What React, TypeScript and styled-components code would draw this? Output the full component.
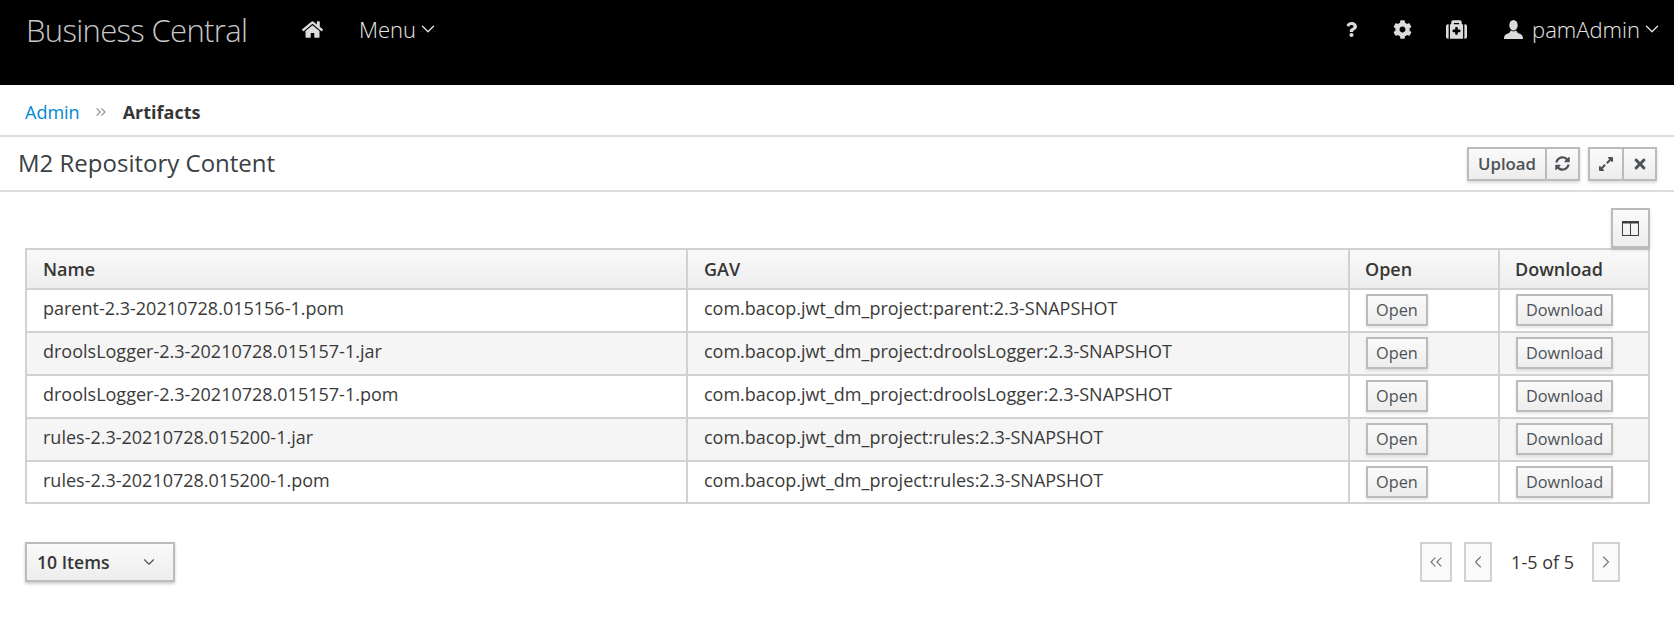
import React from "react";
import styled, { createGlobalStyle } from "styled-components";
import { ChevronDown, ChevronLeft, ChevronRight, ChevronsLeft, ChevronsRight } from "lucide-react";
import { FaCog, FaExpandAlt, FaHome, FaMedkit, FaQuestion, FaSyncAlt, FaTimes } from "react-icons/fa";

const colors = {
  text: "#363636",
  btnText: "#4d5258",
  line: "#d1d1d1",
  rule: "#dddddd",
  link: "#0088ce",
  navText: "#dcdcdc",
};

const GlobalStyle = createGlobalStyle`
  html, body {
    margin: 0;
    padding: 0;
    background: #fff;
    font-family: "Open Sans", "Liberation Sans", sans-serif;
    color: ${colors.text};
  }
`;

const Page = styled.div`
  width: 1674px;
  height: 635px;
  overflow: hidden;
`;

const Masthead = styled.header`
  height: 85px;
  background: #000;
  display: flex;
  align-items: flex-start;
  padding: 0 11px 0 26px;
  box-sizing: border-box;
  color: ${colors.navText};
`;

const Brand = styled.div`
  font-size: 31px;
  font-weight: 300;
  line-height: 30px;
  margin-top: 15px;
  width: 276px;
  color: #c8c8c8;
  letter-spacing: -0.66px;
  white-space: nowrap;
`;

const NavGroup = styled.nav<{ $right?: boolean }>`
  display: flex;
  align-items: center;
  height: 58px;
  margin-left: ${(p) => (p.$right ? "auto" : "0")};
`;

const NavIcon = styled.span<{ $gap: number; $size: number }>`
  display: inline-flex;
  font-size: ${(p) => p.$size}px;
  margin-right: ${(p) => p.$gap}px;
`;

const NavLabel = styled.span`
  display: inline-flex;
  align-items: center;
  gap: 1px;
  font-size: 22px;
  font-weight: 300;
  color: #e8e8e8;
`;

const Breadcrumb = styled.div`
  height: 47px;
  padding: 3px 0 0 25px;
  border-bottom: 2px solid ${colors.rule};
  display: flex;
  align-items: center;
  font-size: 18px;
`;

const CrumbLink = styled.a`
  color: ${colors.link};
`;

const CrumbSep = styled.span`
  display: inline-flex;
  color: #8b8d8f;
  margin: 0 14px 0 13px;
`;

const CrumbCurrent = styled.strong`
  font-weight: 700;
`;

const TitleBar = styled.div`
  height: 51px;
  padding: 0 17px 2px 18px;
  border-bottom: 2px solid ${colors.rule};
  display: flex;
  align-items: center;
  justify-content: space-between;
`;

const Title = styled.h1`
  margin: 0;
  font-size: 24px;
  font-weight: 400;
  color: #393f44;
`;

const Toolbar = styled.div`
  display: flex;
  gap: 8px;
  margin-bottom: -2px;
`;

const BtnGroup = styled.div`
  display: flex;
  box-shadow: 0 2px 3px rgba(3, 3, 3, 0.15);
`;

const Btn = styled.button<{ $w?: number }>`
  box-sizing: border-box;
  width: ${(p) => (p.$w ? `${p.$w}px` : "auto")};
  height: 34px;
  border: 2px solid #bbb;
  margin-left: -2px;
  &:first-child {
    margin-left: 0;
  }
  padding: 0;
  background: linear-gradient(to bottom, #fafafa, #ededed);
  color: ${colors.btnText};
  font-family: inherit;
  font-size: 16.8px;
  font-weight: 600;
  display: inline-flex;
  align-items: center;
  justify-content: center;
`;

const Content = styled.main`
  padding: 16px 25px 0;
`;

const ColumnRow = styled.div`
  display: flex;
  justify-content: flex-end;
`;

const ColumnBtn = styled(Btn)`
  width: 39px;
  height: 40px;
  margin: 0 -1px 0 0;
  box-shadow: 0 2px 3px rgba(3, 3, 3, 0.15);
`;

const Table = styled.table`
  width: 1623px;
  table-layout: fixed;
  border-collapse: collapse;
  border: 2px solid ${colors.line};
  font-size: 18px;
`;

const HeadRow = styled.tr`
  height: 40px;
  background: linear-gradient(to bottom, #fafafa, #ededed);
`;

const Th = styled.th<{ $w: number }>`
  width: ${(p) => p.$w}px;
  box-sizing: border-box;
  border: 2px solid ${colors.line};
  padding: 0 15px 1px;
  &:nth-child(-n + 2) {
    padding-left: 16px;
  }
  text-align: left;
  font-weight: 600;
`;

const Row = styled.tr<{ $alt: boolean }>`
  height: 42.9px;
  background: ${(p) => (p.$alt ? "#f5f5f5" : "#fff")};
`;

const Td = styled.td`
  box-sizing: border-box;
  border: 2px solid ${colors.line};
  padding: 0 15px 5px 16px;
  color: #3a3a3a;
  white-space: nowrap;
`;

const ActionCell = styled(Td)`
  padding: 0 15px 1px 16px;
`;

const ActionBtn = styled.button`
  display: block;
  box-sizing: border-box;
  height: 32px;
  padding: 0 8px;
  border: 2px solid #bbb;
  background: linear-gradient(to bottom, #fafafa, #ededed);
  color: ${colors.btnText};
  font-family: inherit;
  font-size: 16.3px;
  box-shadow: 0 2px 3px rgba(3, 3, 3, 0.1);
`;

const Footer = styled.div`
  display: flex;
  justify-content: space-between;
  align-items: center;
  margin-top: 38px;
`;

const PageSize = styled.button`
  box-sizing: border-box;
  width: 150px;
  height: 40px;
  padding: 0 15px 0 10px;
  border: 2px solid #bbb;
  background: linear-gradient(to bottom, #fafafa, #ededed);
  color: ${colors.text};
  font-family: inherit;
  font-size: 17.6px;
  font-weight: 600;
  display: flex;
  align-items: center;
  justify-content: space-between;
  box-shadow: 0 2px 3px rgba(3, 3, 3, 0.2);
`;

const Pager = styled.div`
  display: flex;
  align-items: center;
  margin-right: 17px;
`;

const PageBtn = styled.span<{ $w: number }>`
  box-sizing: border-box;
  width: ${(p) => p.$w}px;
  height: 40px;
  border: 2px solid ${colors.line};
  background: #fafafa;
  color: #72767b;
  display: inline-flex;
  align-items: center;
  justify-content: center;
  margin-right: 12px;
`;

const PageInfo = styled.span`
  font-size: 18px;
  margin: 0 18px 0 7px;
`;

const files = [
  ["parent-2.3-20210728.015156-1.pom", "com.bacop.jwt_dm_project:parent:2.3-SNAPSHOT"],
  ["droolsLogger-2.3-20210728.015157-1.jar", "com.bacop.jwt_dm_project:droolsLogger:2.3-SNAPSHOT"],
  ["droolsLogger-2.3-20210728.015157-1.pom", "com.bacop.jwt_dm_project:droolsLogger:2.3-SNAPSHOT"],
  ["rules-2.3-20210728.015200-1.jar", "com.bacop.jwt_dm_project:rules:2.3-SNAPSHOT"],
  ["rules-2.3-20210728.015200-1.pom", "com.bacop.jwt_dm_project:rules:2.3-SNAPSHOT"],
];

const ColumnsIcon = () => (
  <svg width="17" height="15" viewBox="0 0 17 15" fill="none" stroke="#393f44">
    <rect x="0.5" y="0.5" width="16" height="14" strokeWidth="1" />
    <path d="M0.5 1.5H16.5" strokeWidth="2" />
    <path d="M8.5 1V14" strokeWidth="1" />
  </svg>
);

const UserIcon = () => (
  <svg width="19" height="19" viewBox="0 0 19 19" fill="currentColor">
    <ellipse cx="9.5" cy="5.2" rx="4.2" ry="5.2" />
    <path d="M6.6 10.2 C7.6 11.6 11.4 11.6 12.4 10.2 C12.4 12.2 14 13.2 15.6 13.8 C17.4 14.5 19 15.4 19 19 H0 C0 15.4 1.6 14.5 3.4 13.8 C5 13.2 6.6 12.2 6.6 10.2 Z" />
  </svg>
);

const App: React.FC = () => {
  return (
    <Page>
      <GlobalStyle />
      <Masthead>
        <Brand>Business Central</Brand>
        <NavGroup>
          <NavIcon $gap={36} $size={21}>
            <FaHome />
          </NavIcon>
          <NavLabel>
            Menu <ChevronDown size={22} strokeWidth={1.3} />
          </NavLabel>
        </NavGroup>
        <NavGroup $right>
          <NavIcon $gap={34} $size={15}>
            <FaQuestion />
          </NavIcon>
          <NavIcon $gap={34} $size={19}>
            <FaCog />
          </NavIcon>
          <NavIcon $gap={37} $size={21}>
            <FaMedkit />
          </NavIcon>
          <NavIcon $gap={9} $size={19}>
            <UserIcon />
          </NavIcon>
          <NavLabel>
            pamAdmin <ChevronDown size={22} strokeWidth={1.3} />
          </NavLabel>
        </NavGroup>
      </Masthead>

      <Breadcrumb>
        <CrumbLink>Admin</CrumbLink>
        <CrumbSep>
          <ChevronsRight size={16} strokeWidth={1.6} />
        </CrumbSep>
        <CrumbCurrent>Artifacts</CrumbCurrent>
      </Breadcrumb>

      <TitleBar>
        <Title>M2 Repository Content</Title>
        <Toolbar>
          <BtnGroup>
            <Btn $w={80}>Upload</Btn>
            <Btn $w={35}>
              <FaSyncAlt size={15} />
            </Btn>
          </BtnGroup>
          <BtnGroup>
            <Btn $w={36}>
              <FaExpandAlt size={16} />
            </Btn>
            <Btn $w={35}>
              <FaTimes size={16} />
            </Btn>
          </BtnGroup>
        </Toolbar>
      </TitleBar>

      <Content>
        <ColumnRow>
          <ColumnBtn>
            <ColumnsIcon />
          </ColumnBtn>
        </ColumnRow>
        <Table>
          <thead>
            <HeadRow>
              <Th $w={661}>Name</Th>
              <Th $w={662}>GAV</Th>
              <Th $w={150}>Open</Th>
              <Th $w={150}>Download</Th>
            </HeadRow>
          </thead>
          <tbody>
            {files.map(([name, gav], i) => (
              <Row key={name} $alt={i % 2 === 1}>
                <Td>{name}</Td>
                <Td>{gav}</Td>
                <ActionCell>
                  <ActionBtn>Open</ActionBtn>
                </ActionCell>
                <ActionCell>
                  <ActionBtn>Download</ActionBtn>
                </ActionCell>
              </Row>
            ))}
          </tbody>
        </Table>
        <Footer>
          <PageSize>
            10 Items <ChevronDown size={18} strokeWidth={1.5} color="#4d5258" />
          </PageSize>
          <Pager>
            <PageBtn $w={32}>
              <ChevronsLeft size={20} strokeWidth={1.3} />
            </PageBtn>
            <PageBtn $w={28}>
              <ChevronLeft size={20} strokeWidth={1.3} />
            </PageBtn>
            <PageInfo>1-5 of 5</PageInfo>
            <PageBtn $w={28}>
              <ChevronRight size={20} strokeWidth={1.3} />
            </PageBtn>
          </Pager>
        </Footer>
      </Content>
    </Page>
  );
};

export default App;
